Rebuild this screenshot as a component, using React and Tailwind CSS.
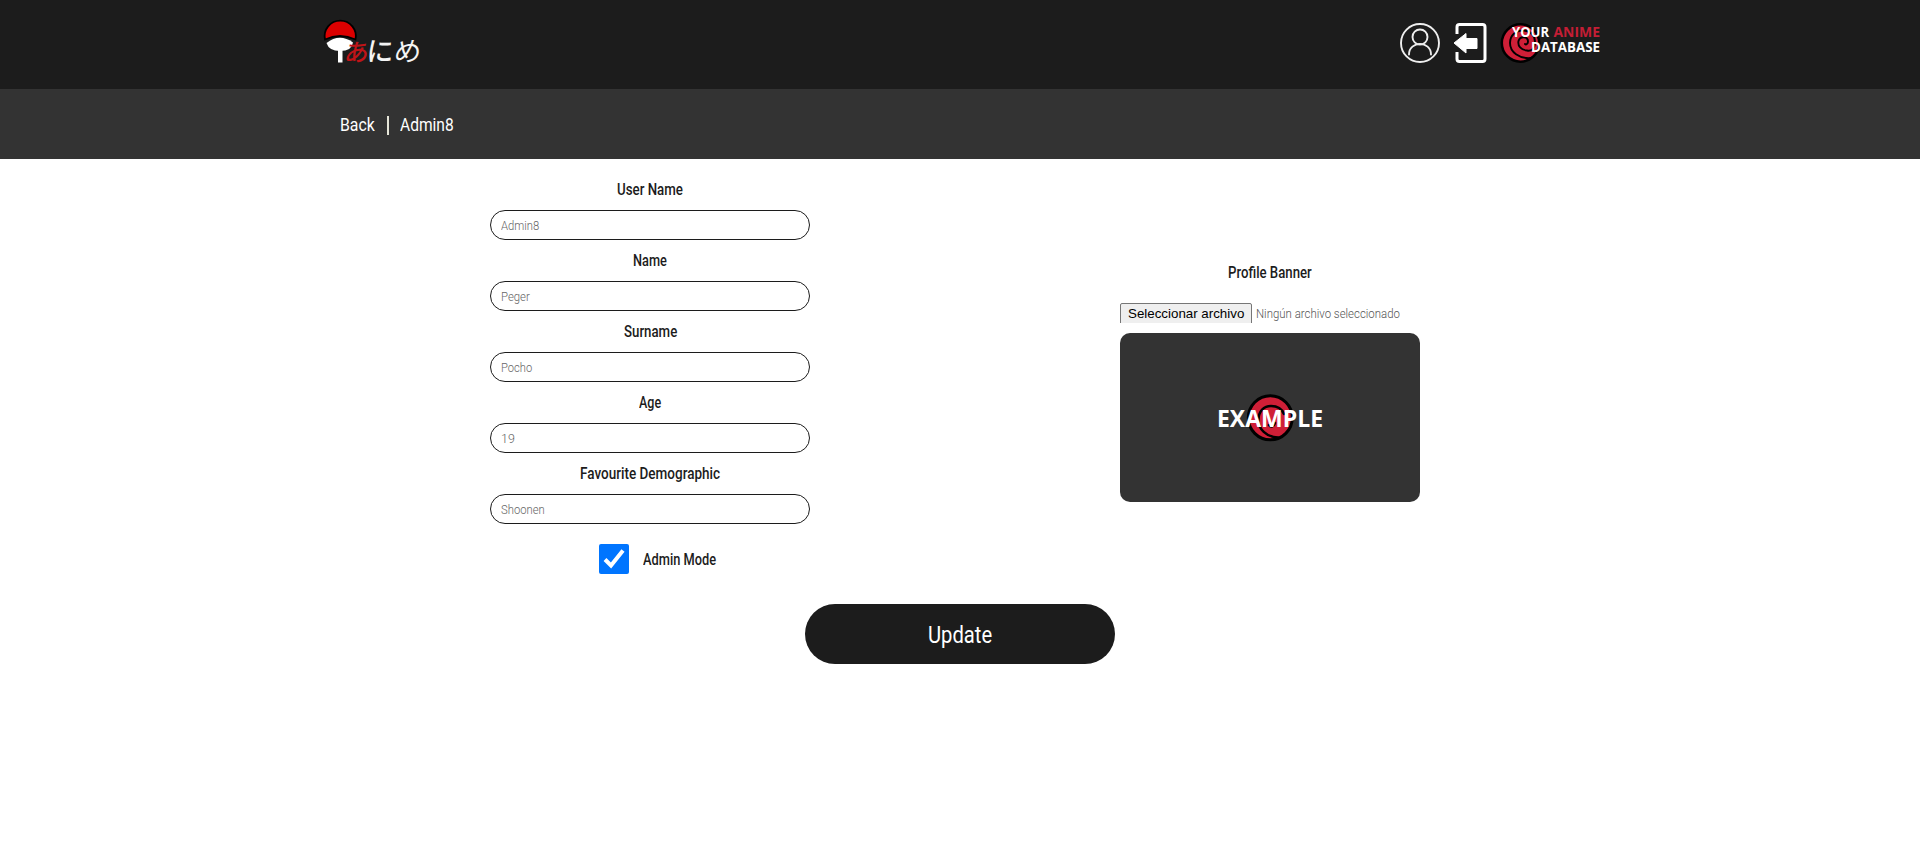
import { useLayoutEffect, useRef } from "react";

function Fit({ width, className = "", children }) {
  const ref = useRef(null);
  useLayoutEffect(() => {
    const el = ref.current;
    el.style.transform = `scaleX(${width / el.offsetWidth})`;
  }, [width]);
  return (
    <span className="inline-block" style={{ width }}>
      <span ref={ref} className={`inline-block origin-left whitespace-nowrap ${className}`}>
        {children}
      </span>
    </span>
  );
}

function Logo() {
  return (
    <svg className="overflow-visible" width="106" height="56" viewBox="320 15 106 56">
      <path d="M325 39.500A15.600 15.600 0 1 1 355.500 39.500Q340 32.500 325 39.500Z" fill="#dc0000" stroke="#000" strokeWidth="1.800" />
      <path d="M326.500 43Q339.500 33 353 42.500Q352 51 340 51Q329 51 326.500 43Z" fill="#fff" />
      <rect x="338" y="48" width="4.500" height="14.500" fill="#fff" />
      <g fontFamily="'Noto Sans CJK JP', sans-serif">
        <text transform="translate(343.500 61) skewX(-10)" fontSize="24" fontWeight="500" fill="#c01418">あ</text>
        <text transform="translate(366 61) skewX(-4)" fontSize="27" fontWeight="500" fill="#f4f4f4">に</text>
        <text transform="translate(393 61) skewX(-8)" fontSize="27" fontWeight="400" fill="#f4f4f4">め</text>
      </g>
    </svg>
  );
}

function Swirl() {
  return (
    <g stroke="#000" strokeLinecap="round">
      <circle cx="20.500" cy="20" r="18.700" fill="#cf1f37" strokeWidth="2.500" />
      <path d="M31 35C19 36 10 29 10 20C10 12 16 7.500 23 7.500C31 7.500 35 13 35 19C35 26 31 28.500 27 27.500C21 27 17.500 23 18.500 18C20 13 28 13 28 18.500C28 21 26 22 25 21" fill="none" strokeWidth="1.900" />
    </g>
  );
}

function Field({ label, width, value, valueWidth }) {
  return (
    <div className="flex h-[71px] flex-col items-center">
      <div className="flex h-10 items-center text-[16.500px] font-medium leading-6 text-[#1c1c1c]">
        <Fit width={width}>{label}</Fit>
      </div>
      <div className="flex h-[30px] w-80 items-center rounded-full border border-[#1c1c1c] px-2.5 pt-0.5 text-[13.330px] font-light text-[#666]">
        <Fit width={valueWidth}>{value}</Fit>
      </div>
    </div>
  );
}

export default function App() {
  return (
    <div className="min-h-[843px] bg-white font-['Roboto',sans-serif]">
      <header className="flex h-[89px] items-start justify-between bg-[#1c1c1c] pl-[320px] pr-[318px] pt-[15px]">
        <Logo />
        <div className="flex items-center pt-2">
          <svg width="40" height="40" viewBox="0 0 40 40" fill="none" stroke="#eee" strokeWidth="1.900">
            <circle cx="20" cy="20" r="19" />
            <circle cx="20" cy="14" r="7.500" />
            <path d="M9 31.500C9 17.500 31 17.500 31 31.500" strokeLinecap="round" />
          </svg>
          <svg className="ml-[13px]" width="34" height="40" viewBox="0 0 34 40">
            <path d="M4 11V4Q4 1.500 6.500 1.500H29.500Q32 1.500 32 4V36Q32 38.500 29.500 38.500H6.500Q4 38.500 4 36V29" fill="none" stroke="#fff" strokeWidth="3" />
            <path d="M1 20L13 10.500V15.500H24V25.500H13V30Z" fill="#fff" stroke="#fff" strokeLinejoin="round" />
          </svg>
          <svg className="ml-[13px] overflow-visible" width="102" height="40" viewBox="0 0 102 40">
            <Swirl />
            <g fontFamily="'Open Sans', sans-serif" fontWeight="700" fontSize="15" fill="#fff">
              <text x="12" y="13.500" textLength="37" lengthAdjust="spacingAndGlyphs">YOUR</text>
              <text x="53.500" y="13.500" fill="#c41e35" textLength="46.500" lengthAdjust="spacingAndGlyphs">ANIME</text>
              <text x="31" y="28.500" textLength="69" lengthAdjust="spacingAndGlyphs">DATABASE</text>
            </g>
          </svg>
        </div>
      </header>

      <nav className="flex h-[70px] items-center bg-[#333] pl-[340px] text-[19px] text-white">
        <a className="mt-0.5 h-7 leading-7"><Fit width={35}>Back</Fit></a>
        <span className="ml-3 mt-0.5 h-[19px] w-[2px] bg-[#e5e5d8]" />
        <span className="ml-[11px] mt-0.5 h-7 leading-7"><Fit width={54}>Admin8</Fit></span>
      </nav>

      <main>
        <div className="flex h-[445px] pl-[490px] pt-[11px]">
          <form className="flex w-80 flex-col">
            <Field label="User Name" width={66} value="Admin8" valueWidth={38} />
            <Field label="Name" width={34} value="Peger" valueWidth={29} />
            <Field label="Surname" width={53} value="Pocho" valueWidth={31} />
            <Field label="Age" width={22} value="19" valueWidth={14} />
            <Field label="Favourite Demographic" width={140} value="Shoonen" valueWidth={44} />
            <div className="mt-[19px] flex h-[30px] items-center pl-[109px]">
              <svg width="30" height="30" viewBox="0 0 30 30">
                <rect width="30" height="30" rx="2" fill="#0075ff" />
                <path d="M6 15.500L12 21.500L24 6.500" fill="none" stroke="#fff" strokeWidth="4" />
              </svg>
              <div className="ml-[14px] mt-0.5 text-[16.500px] font-medium leading-6 text-[#1c1c1c]">
                <Fit width={73}>Admin Mode</Fit>
              </div>
            </div>
          </form>
          <section className="ml-[310px] flex w-[300px] flex-col pt-[91px]">
            <div className="flex h-6 items-center justify-center pt-px text-[16.500px] font-medium text-[#1c1c1c]">
              <Fit width={84}>Profile Banner</Fit>
            </div>
            <div className="mt-[18px] flex h-5 items-start overflow-hidden">
              <div className="h-[22px] w-[132px] shrink-0 rounded-[2px] border border-[#767676] bg-[#efefef] text-center font-['Liberation_Sans',sans-serif] text-[13.330px] leading-[19px] text-black">
                <Fit width={116}>Seleccionar archivo</Fit>
              </div>
              <div className="ml-1 text-[13.330px] font-light leading-[21px] text-[#555]">
                <Fit width={144}>Ningún archivo seleccionado</Fit>
              </div>
            </div>
            <div className="mt-2.5 flex h-[169px] items-center justify-center rounded-[10px] bg-[#333]">
              <svg className="overflow-visible" width="108" height="48" viewBox="0 0 108 48">
                <circle cx="54.300" cy="23.800" r="22" fill="#cf1f37" stroke="#000" strokeWidth="3" />
                <path d="M62 43.500C50 43 42.500 35 42.500 26C42.500 17 48 12 55 12C62 12 66 15 68 20M53 31C55 34 58 32 59 29" fill="none" stroke="#000" strokeWidth="2.500" strokeLinecap="round" />
                <text x="1" y="33" fontFamily="'Open Sans', sans-serif" fontWeight="700" fontSize="23.500" fill="#fff" textLength="106" lengthAdjust="spacingAndGlyphs">EXAMPLE</text>
              </svg>
            </div>
          </section>
        </div>
        <button className="mx-auto flex h-[60px] w-[310px] items-center justify-center rounded-full bg-[#1c1c1c] pt-0.5 text-[24px] font-normal text-white">
          <Fit width={64}>Update</Fit>
        </button>
      </main>
    </div>
  );
}
